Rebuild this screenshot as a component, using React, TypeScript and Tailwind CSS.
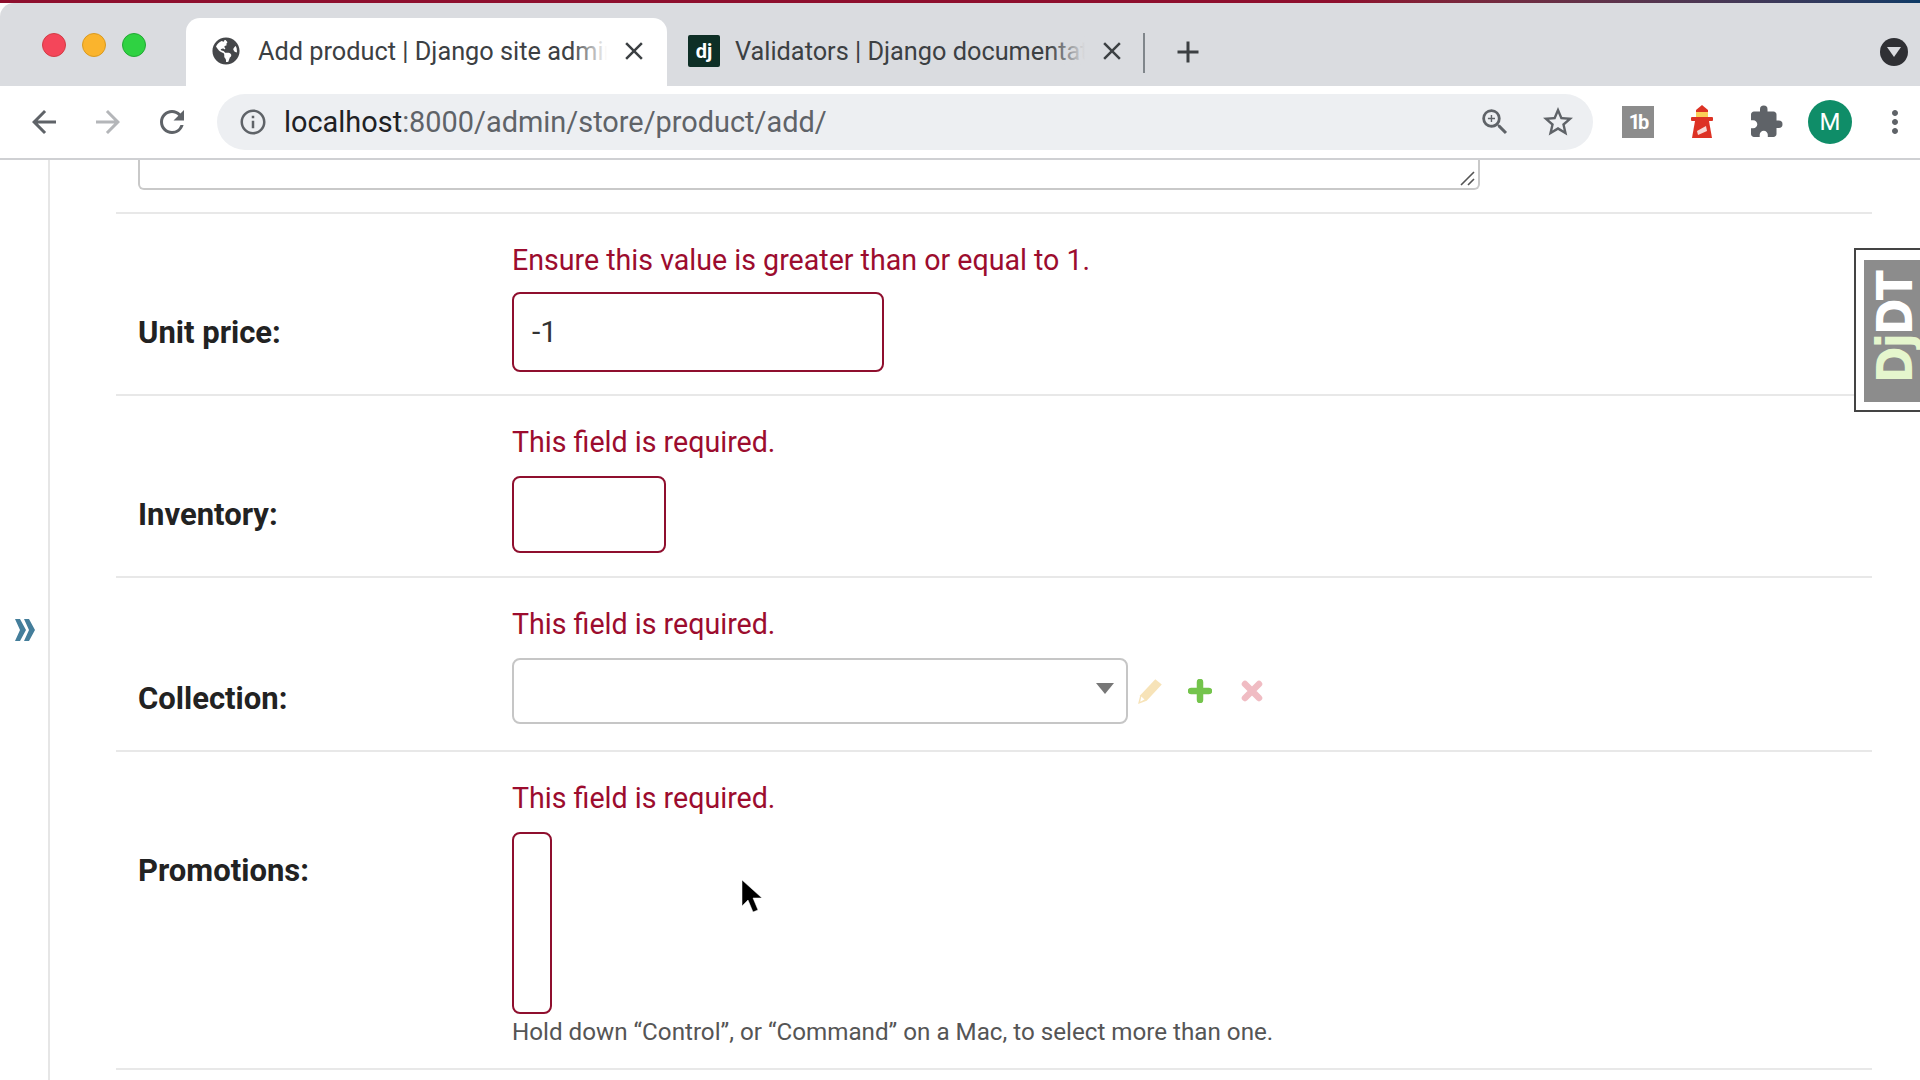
import type { ReactNode } from "react";
import { FaGlobeAmericas } from "react-icons/fa";
import {
  MdAdd,
  MdArrowBack,
  MdArrowForward,
  MdClose,
  MdExtension,
  MdInfoOutline,
  MdMoreVert,
  MdRefresh,
  MdStarBorder,
  MdZoomIn,
} from "react-icons/md";

function Tab({
  icon,
  title,
  active,
}: {
  icon: ReactNode;
  title: string;
  active?: boolean;
}) {
  return (
    <div
      className={
        active
          ? "flex h-[68px] w-[481px] items-center rounded-t-[14px] bg-white pb-[3px] pl-[26px] pr-[18px]"
          : "flex h-[68px] w-[476px] items-center pb-[3px] pl-[21px] pr-[16px]"
      }
    >
      <div className={active ? "flex w-[46px] shrink-0 items-center" : "flex w-[47px] shrink-0 items-center"}>
        {icon}
      </div>
      <div className="relative flex-1 overflow-hidden whitespace-nowrap pt-[2px] text-[25.3px] leading-[32px] text-[#3c4043]">
        {title}
        <div
          className={
            active
              ? "absolute inset-y-0 right-0 w-[36px] bg-gradient-to-r from-transparent to-white"
              : "absolute inset-y-0 right-0 w-[36px] bg-gradient-to-r from-transparent to-[#dadce0]"
          }
        />
      </div>
      <MdClose className="ml-[12px] shrink-0 text-[#3c4043]" size={30} />
    </div>
  );
}

function Lighthouse() {
  return (
    <svg width="24" height="34" viewBox="0 0 24 34">
      <path d="M12 0l6 5v4H6V5z" fill="#dd3224" />
      <rect x="6" y="7" width="12" height="8" fill="#fbcf58" />
      <rect x="1" y="12" width="22" height="4" rx="1" fill="#dd3224" />
      <path d="M5 16h14l3 17H2z" fill="#dd3224" />
      <path d="M7 26l9-5 1 5-9 4z" fill="#f6d9d5" />
    </svg>
  );
}

function FormRow({
  label,
  labelClassName = "pt-[103px]",
  children,
}: {
  label: string;
  labelClassName?: string;
  children: ReactNode;
}) {
  return (
    <div className="flex border-b-2 border-[#e8e8e8] pl-[22px]">
      <div
        className={`w-[374px] shrink-0 text-[31px] font-bold leading-[32px] text-[#222] ${labelClassName}`}
      >
        {label}
      </div>
      <div className="flex-1">{children}</div>
    </div>
  );
}

function ErrorText({ children }: { children: ReactNode }) {
  return (
    <p className="pt-[30px] text-[28.6px] leading-[32px] text-[#9c0c2e]">
      {children}
    </p>
  );
}

export default function App() {
  return (
    <div className="relative h-[1080px] w-[1920px] overflow-hidden bg-white font-['Roboto',sans-serif]">
      {/* Browser chrome */}
      <div className="h-[3px] bg-gradient-to-r from-[#8e0f2e] via-[#8e0f2e] via-70% to-[#0c3a66]" />
      <div className="flex h-[83px] items-end rounded-tl-[14px] bg-[#dadce0]">
        <div className="flex h-[68px] w-[186px] shrink-0 items-center gap-[16px] pb-[14px] pl-[42px]">
          <span className="h-[24px] w-[24px] rounded-full border border-[#d23c45] bg-[#f4465a]" />
          <span className="h-[24px] w-[24px] rounded-full border border-[#d99a20] bg-[#fab42d]" />
          <span className="h-[24px] w-[24px] rounded-full border border-[#22a834] bg-[#2fd242]" />
        </div>
        <Tab
          active
          title="Add product | Django site administration"
          icon={<FaGlobeAmericas className="text-[#45474a]" size={28} />}
        />
        <Tab
          title="Validators | Django documentation"
          icon={
            <div className="flex h-[32px] w-[32px] items-center justify-center rounded-[2px] bg-[#0e2f26] text-[20px] font-bold text-white">
              dj
            </div>
          }
        />
        <div className="mb-[13px] h-[40px] w-[2px] bg-[#80868b]" />
        <div className="mb-[16px] ml-[25px] flex-1">
          <MdAdd className="text-[#3c4043]" size={36} />
        </div>
        <div className="mb-[20px] mr-[12px] flex h-[28px] w-[28px] items-center justify-center rounded-full bg-[#2f3034]">
          <div className="h-0 w-0 border-x-[7px] border-t-[10px] border-x-transparent border-t-[#dadce0]" />
        </div>
      </div>
      <div className="flex h-[72px] items-center bg-white">
        <div className="flex w-[217px] shrink-0 items-center pl-[26px]">
          <MdArrowBack className="text-[#5f6368]" size={36} />
          <MdArrowForward className="ml-[28px] text-[#b4b6b9]" size={36} />
          <MdRefresh className="ml-[28px] text-[#5f6368]" size={36} />
        </div>
        <div className="flex h-[56px] w-[1376px] shrink-0 items-center rounded-full bg-[#edeff2] pl-[21px] pr-[17px]">
          <MdInfoOutline className="text-[#5f6368]" size={30} />
          <div className="ml-[16px] flex-1 text-[28.9px] leading-[36px] text-[#5f6368]">
            <span className="text-[#202124]">localhost</span>:8000/admin/store/product/add/
          </div>
          <MdZoomIn className="text-[#5f6368]" size={34} />
          <MdStarBorder className="ml-[28px] text-[#5f6368]" size={36} />
        </div>
        <div className="flex flex-1 items-center">
          <div className="ml-[29px] flex h-[32px] w-[32px] items-center justify-center bg-[#8c8c8c] text-[20px] font-bold tracking-[-2px] text-white">
            1b
          </div>
          <div className="ml-[36px]">
            <Lighthouse />
          </div>
          <MdExtension className="ml-[34px] text-[#5f6368]" size={36} />
          <div className="ml-[24px] flex h-[44px] w-[44px] items-center justify-center rounded-full bg-[#0f8d68] text-[24px] text-white">
            M
          </div>
          <MdMoreVert className="ml-[25px] text-[#5f6368]" size={36} />
        </div>
      </div>
      <div className="h-[2px] bg-[#cfd0d3]" />

      {/* Admin page */}
      <div className="flex">
        <div className="flex h-[920px] w-[50px] shrink-0 border-r-2 border-[#e6e6e6] pl-[15px] pt-[459px]">
          <svg width="20" height="22" viewBox="0 0 20 22">
            <path d="M0 0h5l6 11-6 11H0l5-11zM9 0h5l6 11-6 11H9l5-11z" fill="#447e9b" />
          </svg>
        </div>
        <div className="w-[1822px] pl-[66px]">
          <div className="border-b-2 border-[#e8e8e8] pb-[22px] pl-[22px]">
            <div className="relative h-[30px] w-[1342px] rounded-b-[6px] border-x-2 border-b-2 border-[#c9c9c9]">
              <svg className="absolute bottom-[2px] right-[3px]" width="16" height="16" viewBox="0 0 16 16">
                <path d="M2 15L15 2M9 15l6-6" stroke="#555" strokeWidth="1.6" />
              </svg>
            </div>
          </div>

          <FormRow label="Unit price:">
            <ErrorText>Ensure this value is greater than or equal to 1.</ErrorText>
            <div className="mb-[22px] mt-[16px] flex h-[80px] w-[372px] items-center rounded-[8px] border-2 border-[#8f0f2e] pb-[2px] pl-[18px] text-[30px] text-[#333]">
              -1
            </div>
          </FormRow>

          <FormRow label="Inventory:">
            <ErrorText>This field is required.</ErrorText>
            <div className="mb-[23px] mt-[18px] h-[77px] w-[154px] rounded-[8px] border-2 border-[#8f0f2e]" />
          </FormRow>

          <FormRow label="Collection:" labelClassName="pt-[105px]">
            <ErrorText>This field is required.</ErrorText>
            <div className="mb-[26px] mt-[18px] flex items-center">
              <div className="flex h-[66px] w-[616px] items-center justify-end rounded-[8px] border-2 border-[#c6c6c6] pb-[6px] pr-[12px]">
                <div className="h-0 w-0 border-x-[9px] border-t-[11px] border-x-transparent border-t-[#777]" />
              </div>
              <svg className="ml-[9px]" width="28" height="28" viewBox="0 0 26 26">
                <path d="M1 25l2-8L17 2l6 5L9 22z" fill="#f7e3b8" />
                <path d="M3 23l1-5 3 3z" fill="#fff" />
              </svg>
              <svg className="ml-[23px]" width="24" height="24" viewBox="0 0 24 24">
                <path d="M12 3v18M3 12h18" stroke="#74c44c" strokeWidth="6.5" strokeLinecap="round" />
              </svg>
              <svg className="ml-[28px]" width="24" height="24" viewBox="0 0 24 24">
                <path d="M5 5l14 14M19 5L5 19" stroke="#f0bcc3" strokeWidth="6.5" strokeLinecap="round" />
              </svg>
            </div>
          </FormRow>

          <FormRow label="Promotions:">
            <ErrorText>This field is required.</ErrorText>
            <div className="mt-[18px] h-[182px] w-[40px] rounded-[8px] border-2 border-[#8f0f2e]" />
            <p className="mb-[20px] mt-[2px] text-[24.2px] leading-[32px] text-[#555]">
              Hold down “Control”, or “Command” on a Mac, to select more than one.
            </p>
          </FormRow>
        </div>
      </div>

      {/* Debug toolbar handle */}
      <div className="absolute left-[1854px] top-[248px] h-[164px] w-[70px] border-2 border-[#444] bg-white pl-[8px] pt-[10px]">
        <div className="flex h-[142px] w-[60px] items-center justify-center overflow-hidden bg-[#8c8c8c] pl-[2px]">
          <span className="inline-block scale-y-[0.88]">
            <span className="inline-block rotate-180 whitespace-nowrap text-[50px] font-bold leading-[50px] text-white [writing-mode:vertical-rl] font-['DejaVu_Sans',sans-serif] tracking-[-2px]">
              <span className="text-[#e5f6cd]">Dj</span>DT
            </span>
          </span>
        </div>
      </div>

      {/* Mouse pointer */}
      <svg className="absolute left-[741px] top-[879px]" width="24" height="36" viewBox="0 0 24 36">
        <path d="M1 1v26l6-6 5 12 5-2-5-12h9z" fill="#000" stroke="#fff" strokeOpacity="0.5" strokeWidth="1" />
      </svg>
    </div>
  );
}
